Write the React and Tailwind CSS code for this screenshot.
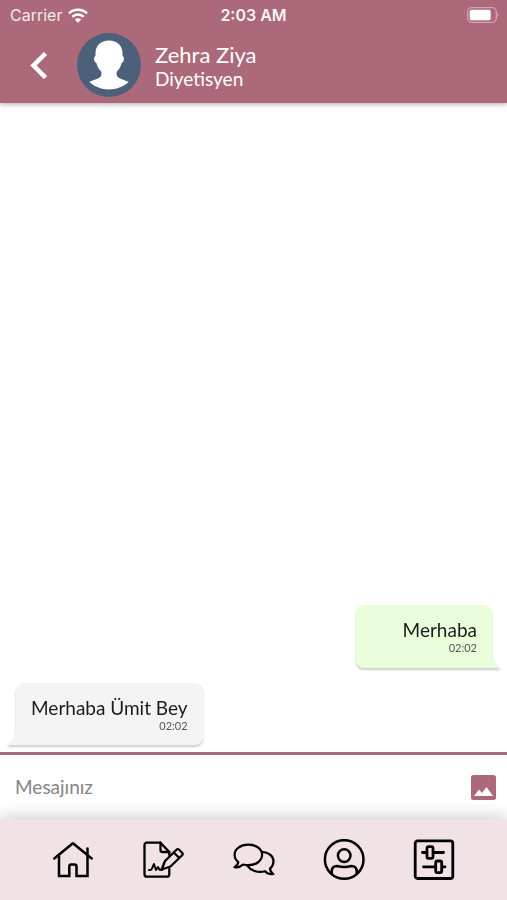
import React, { useState } from 'react'

const messages = [
  { id: 1, text: 'Merhaba', time: '02:02', mine: true },
  { id: 2, text: 'Merhaba Ümit Bey', time: '02:02', mine: false },
]

const iconProps = {
  viewBox: '0 0 42 42',
  className: 'size-[42px]',
  fill: 'none',
  stroke: 'currentColor',
  strokeWidth: 2.5,
  strokeLinecap: 'round',
  strokeLinejoin: 'round',
  'aria-hidden': true,
}

const HomeIcon = () => (
  <svg {...iconProps}>
    <path d="M2.300 19.500 20.900 4.300 39.700 19.500" />
    <path d="M7 17v20h10.300V27.500q0-2 2-2h3.200q2 0 2 2V37H35.500V9.500" strokeLinejoin="miter" />
  </svg>
)

const NotesIcon = () => (
  <svg {...iconProps} strokeWidth={2.3}>
    <path d="M27.300 16v-3L18.500 3.700H5q-2.500 0-2.500 2.500v29q0 2.500 2.500 2.500h19.800q2.500 0 2.500-2.500V30" />
    <path d="M18.500 3.700V11q0 2 2 2h6.800" />
    <path d="M19.700 30.500l3.300-8.500L34.500 10.800q1.300-1.300 2.600 0l3 3q1.200 1.300 0 2.500L28.500 27.500z" />
    <path d="M31.800 13.500l5.300 5.300" />
    <path d="M7 31h1.500q1 0 1.500-1.500l2-4.500 2 6 2-3 1.500 2.700h3" strokeWidth={1.900} />
  </svg>
)

const ChatIcon = () => (
  <svg {...iconProps} strokeWidth={2.200}>
    <path d="M15.200 5.700C7.300 5.700 1.600 10 1.600 15.800c0 3 1.500 5.700 3.700 7.300 0 2-1.700 3.700-3.800 5 3 .6 6.300-.4 8.500-2.600 1.700.5 3.400.7 5.200.7 7.800 0 13.900-4.400 13.900-10.400S23 5.700 15.200 5.700z" />
    <path d="M29 12.900c7 .3 11.500 4.300 11.500 9.400 0 3-1.500 5.600-3.500 7.300 0 2.200 1.500 4 3.300 5.400-3.300.5-6.100-.5-8.300-2.800-7.500 2-14.500-.8-17.700-5.600" />
  </svg>
)

const ProfileIcon = () => (
  <svg {...iconProps}>
    <circle cx="21.200" cy="20.500" r="19.300" />
    <circle cx="21.200" cy="16.600" r="6.300" />
    <path d="M8.700 35v-2.500q0-5.500 5.500-5.500 3.500 1 7 1t7-1q5.500 0 5.500 5.500V35" />
  </svg>
)

const SettingsIcon = () => (
  <svg {...iconProps} strokeWidth={2.800}>
    <rect x="2.200" y="1.900" width="37.600" height="37.600" rx="2.500" />
    <path d="M9.500 13.500h4M21 13.500h9.500M10.500 27.800H22M30 27.800h2" />
    <rect x="14" y="7.700" width="6" height="11.600" rx="1.500" />
    <rect x="22.700" y="22" width="6" height="11.600" rx="1.500" />
  </svg>
)

const navItems = [
  { label: 'Ana Sayfa', Icon: HomeIcon },
  { label: 'Notlar', Icon: NotesIcon },
  { label: 'Mesajlar', Icon: ChatIcon },
  { label: 'Profil', Icon: ProfileIcon },
  { label: 'Ayarlar', Icon: SettingsIcon },
]

const StatusBar = () => (
  <div className="grid h-[30px] grid-cols-3 items-center px-2 font-['Inter',sans-serif] text-[16px] leading-5">
    <div className="flex items-center gap-1.5 pl-0.5 text-white/85">
      Carrier
      <svg viewBox="0 0 20 15" className="h-[15px] w-5" fill="none" stroke="#fff" strokeWidth="2.600" aria-hidden="true">
        <path d="M1 5.400a12.800 12.800 0 0 1 18 0" />
        <path d="M4.300 8.900a8.100 8.100 0 0 1 11.400 0" />
        <path d="M10 14.800 6.800 11.500a4.600 4.600 0 0 1 6.400 0z" fill="#fff" stroke="none" />
      </svg>
    </div>
    <div className="text-center font-semibold text-white/95">2:03 AM</div>
    <svg viewBox="0 0 32 16" className="h-4 w-8 justify-self-end" aria-hidden="true">
      <rect x=".7" y=".7" width="28.600" height="14.600" rx="4" fill="none" stroke="#fff" strokeOpacity=".4" strokeWidth="1.300" />
      <rect x="2.700" y="2.700" width="21" height="10.600" rx="1.800" fill="#fff" />
      <path d="M30.500 5.700q2 2.300 0 4.600z" fill="#fff" fillOpacity=".5" />
    </svg>
  </div>
)

const Avatar = () => (
  <svg viewBox="0 0 64 64" className="size-16" role="img" aria-label="Zehra Ziya">
    <circle cx="32" cy="32" r="32" fill="#4c607a" />
    <path
      d="M32 7.500C24 7.500 18.500 12.500 18.500 20v3c-2.300.5-1.800 6 1 7.200.7 3.500 2.500 6.500 4.900 8.500v2.500c0 4-5.400 4.800-12.100 7.600C17 53.500 24 56.500 32 56.500s15-3 19.700-7.700C45 46 39.600 45.200 39.600 41.200v-2.500c2.400-2 4.200-5 4.900-8.500 2.800-1.200 3.300-6.700 1-7.200v-3C45.500 12.500 40 7.500 32 7.500z"
      fill="#fff"
    />
  </svg>
)

const Bubble = ({ message }) => {
  const { text, time, mine } = message
  return (
    <li
      className={`relative rounded-t-lg pt-[13px] text-right drop-shadow-[0_2px_1px_rgba(0,0,0,0.2)] ${
        mine
          ? 'mr-[7px] h-[63px] min-w-[136px] self-end rounded-bl-lg bg-[#ebfedb] px-[15px]'
          : 'ml-2 h-[62px] self-start rounded-br-lg bg-[#f4f4f4] px-[15px]'
      }`}
    >
      <p className="text-[19px] leading-6 text-[#1c1c1c]">{text}</p>
      <time className="block text-[11px] leading-3 text-[#555]">{time}</time>
      <svg
        viewBox="0 0 9 13"
        className={`absolute bottom-0 h-[13px] w-[9px] ${mine ? 'left-full fill-[#ebfedb]' : 'right-full -scale-x-100 fill-[#f4f4f4]'}`}
        aria-hidden="true"
      >
        <path d="M0 0q1 7 9 13H0z" />
      </svg>
    </li>
  )
}

const App = () => {
  const [draft, setDraft] = useState('')

  return (
    <div className="flex min-h-screen flex-col bg-white font-['Lato',sans-serif]">
      <header className="z-10 bg-[#ab697a] pb-[6px] text-white shadow-[0_1px_5px_rgba(0,0,0,0.35)]">
        <StatusBar />
        <div className="flex items-center pt-[3px] pl-[29px]">
          <button type="button" aria-label="Geri" className="mr-7 py-2">
            <svg viewBox="0 0 20 28" className="h-7 w-5" fill="none" stroke="currentColor" strokeWidth="4.500" aria-hidden="true">
              <path d="M16.500 2.500 4.500 14.500l12 12" />
            </svg>
          </button>
          <Avatar />
          <div className="ml-[14px] pt-1">
            <h1 className="text-[22px] leading-6">Zehra Ziya</h1>
            <p className="text-[19px] leading-6">Diyetisyen</p>
          </div>
        </div>
      </header>

      <main className="flex grow flex-col justify-end px-2 pb-[7px]">
        <ul className="flex flex-col gap-[15px]">
          {messages.map((message) => (
            <Bubble key={message.id} message={message} />
          ))}
        </ul>
      </main>

      <form
        className="flex h-[67px] items-center border-t-3 border-[#ab697a] pr-[11px] pl-[15px]"
        onSubmit={(e) => e.preventDefault()}
      >
        <input
          type="text"
          aria-label="Mesajınız"
          placeholder="Mesajınız"
          value={draft}
          onChange={(e) => setDraft(e.target.value)}
          className="min-w-0 grow text-[19px] leading-6 outline-none placeholder:text-[#858585]"
        />
        <button type="button" aria-label="Resim ekle">
          <svg viewBox="0 0 25 25" className="size-[25px]" aria-hidden="true">
            <rect width="25" height="25" rx="2.500" fill="#ab697a" />
            <path d="M3 21 8 14.500l3 3.500 4.500-6L22 21z" fill="#fff" />
          </svg>
        </button>
      </form>

      <nav className="flex h-[81px] items-center justify-between bg-[#f1e2e5] px-[52px] text-black shadow-[0_-2px_16px_rgba(0,0,0,0.2)]">
        {navItems.map(({ label, Icon }) => (
          <button key={label} type="button" aria-label={label}>
            <Icon />
          </button>
        ))}
      </nav>
    </div>
  )
}

export default App
